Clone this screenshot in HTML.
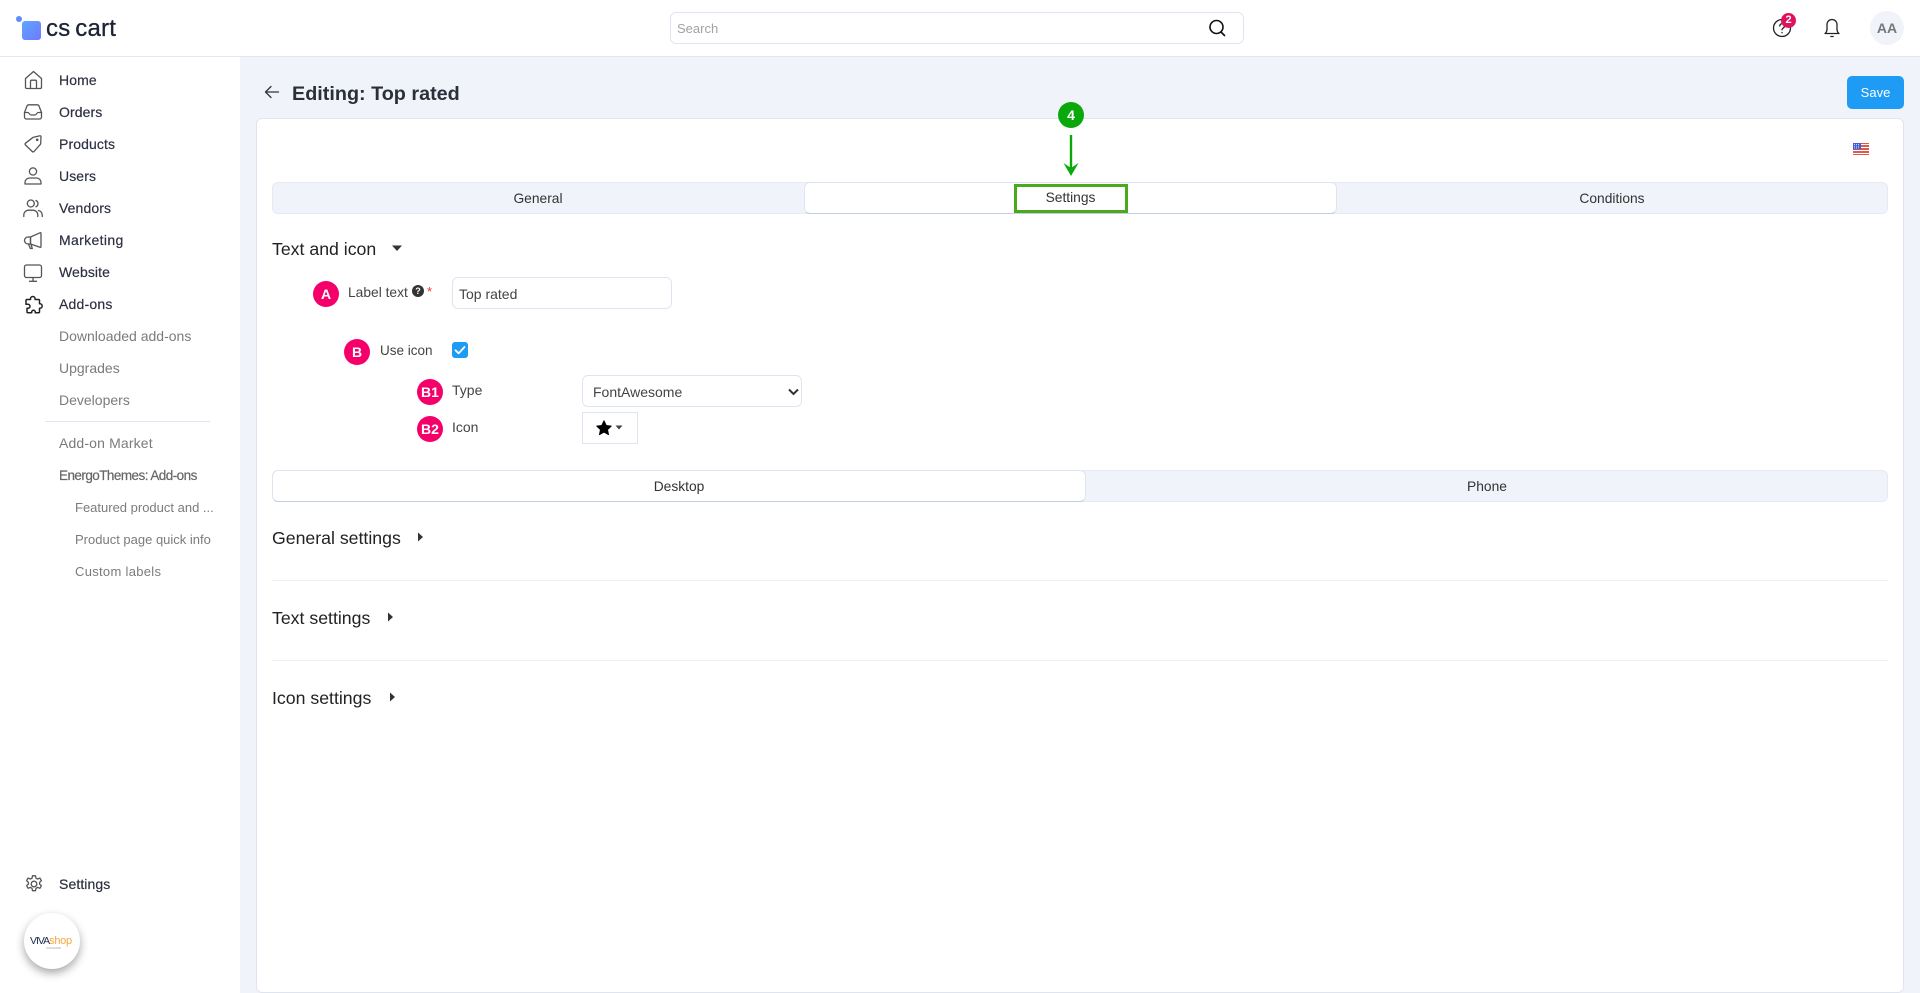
<!DOCTYPE html>
<html lang="en">
<head>
<meta charset="utf-8">
<title>Editing: Top rated</title>
<style>
html,body{margin:0;padding:0;width:1920px;height:993px;overflow:hidden;background:#f0f3f9;font-family:"Liberation Sans",sans-serif;color:#2b2f3a;font-size:14px}
.a{position:absolute;white-space:nowrap}
.t{position:absolute;white-space:nowrap;line-height:20px;height:20px}
.nav{left:59px;color:#2d3142;font-size:14px;-webkit-text-stroke:.2px #2d3142;letter-spacing:.1px}
.sub{left:59px;color:#7b7b7b;font-size:14px}
.ch{left:75px;color:#7b7b7b;font-size:13px}
.ic{position:absolute;left:23px;width:20px;height:20px;fill:none;stroke:#555;stroke-width:1.3;stroke-linejoin:round;stroke-linecap:round}
.tabbar{position:absolute;left:272px;width:1616px;height:32px;background:#f0f3f9;border-radius:6px;box-shadow:inset 0 0 0 1px #e6eaf3}
.tabon{position:absolute;background:#fff;border:1px solid #dfe5f0;border-bottom:1px solid #c2cde3;box-sizing:border-box;border-radius:6px}
.tabl{color:#333;text-align:center;font-size:13.8px}
.h{left:272px;font-size:17.7px;color:#222;line-height:24px;height:24px}
.bd{position:absolute;width:26px;height:26px;border-radius:50%;background:#f5006a;color:#fff;font-weight:bold;font-size:14px;line-height:26px;text-align:center}
.fld{position:absolute;background:#fff;border:1px solid #dfe5f0;box-sizing:border-box;border-radius:6px}
.hr{position:absolute;left:272px;width:1616px;height:1px;background:#eceef3}
</style>
</head>
<body>
<!-- top bar -->
<div class="a" style="left:0;top:0;width:1920px;height:56px;background:#fff;border-bottom:1px solid #e1e7f2;box-sizing:content-box"></div>
<div class="a" style="left:16px;top:16px;width:6px;height:6px;border-radius:50%;background:#5f8bff"></div>
<div class="a" style="left:22px;top:21px;width:19px;height:19px;border-radius:3px;background:linear-gradient(135deg,#5fa6ff,#6f78ff)"></div>
<div class="t" style="left:46px;top:17px;font-size:24px;line-height:24px;height:24px;color:#1c2333;-webkit-text-stroke:.3px #1c2333;letter-spacing:.2px;word-spacing:-2px">cs cart</div>

<div class="fld" style="left:670px;top:12px;width:574px;height:32px"></div>
<div class="t" style="left:677px;top:19px;color:#a2a2a2;font-size:13px">Search</div>
<svg class="a" style="left:1207px;top:18px" width="20" height="20" viewBox="0 0 20 20" fill="none" stroke="#111" stroke-width="1.6" stroke-linecap="round"><circle cx="9.5" cy="9" r="6.5"/><path d="M14 14l3.500 3.500"/></svg>

<svg class="a" style="left:1771px;top:17px" width="22" height="22" viewBox="0 0 22 22" fill="none" stroke="#222" stroke-width="1.3" stroke-linecap="round"><circle cx="11" cy="11" r="8.500"/><path d="M8.800 9a2.300 2.300 0 1 1 3.400 2c-.8.500-1.200 1-1.200 1.800"/><path d="M11 15.500v.3"/></svg>
<div class="a" style="left:1781px;top:13px;width:15px;height:15px;border-radius:50%;background:#e0115f;color:#fff;font-weight:bold;font-size:11px;line-height:15px;text-align:center">2</div>
<svg class="a" style="left:1821px;top:17px" width="22" height="22" viewBox="0 0 22 22" fill="none" stroke="#222" stroke-width="1.3" stroke-linecap="round" stroke-linejoin="round"><path d="M4 16.500c1.300-1 2-2.500 2-4.500V7.500a5 5 0 0 1 10 0V12c0 2 .7 3.500 2 4.500z"/><path d="M9.800 19.500h2.400"/></svg>
<div class="a" style="left:1870px;top:11px;width:34px;height:34px;border-radius:50%;background:#f0f3f9;color:#777;font-weight:bold;font-size:14px;line-height:34px;text-align:center">AA</div>

<!-- sidebar -->
<div class="a" style="left:0;top:57px;width:240px;height:936px;background:#fff"></div>
<svg class="ic" style="top:70px" viewBox="0 0 20 20"><path d="M2.500 8.500L10.500 1.500l8 7v8.800a1.200 1.200 0 0 1-1.200 1.200H3.700a1.200 1.200 0 0 1-1.200-1.200z"/><path d="M7.500 18.500v-7a1.300 1.300 0 0 1 1.300-1.300h3.400a1.300 1.300 0 0 1 1.300 1.300v7"/></svg>
<div class="t nav" style="top:70px">Home</div>
<svg class="ic" style="top:102px" viewBox="0 0 20 20"><path d="M1.500 10.500L4 4a2 2 0 0 1 1.800-1.200h8.400A2 2 0 0 1 16 4l2.500 6.500v4.500a2 2 0 0 1-2 2h-13a2 2 0 0 1-2-2z"/><path d="M1.500 10.500h3.500c1 0 1.500 2.500 3 2.500h4c1.500 0 2-2.500 3-2.500h3.500"/></svg>
<div class="t nav" style="top:102px">Orders</div>
<svg class="ic" style="top:134px" viewBox="0 0 20 20"><path d="M10.500 3.300L17 1.800a.8.8 0 0 1 1 .8l-.3 7a1.500 1.500 0 0 1-.5 1L11 17.500a1.300 1.300 0 0 1-1.800 0L2.500 11a1.300 1.300 0 0 1 0-1.800L9.500 3.800a2 2 0 0 1 1-.5z"/><circle cx="14.200" cy="5.800" r=".7"/></svg>
<div class="t nav" style="top:134px">Products</div>
<svg class="ic" style="top:166px" viewBox="0 0 20 20"><circle cx="10" cy="5.500" r="3.600"/><path d="M2 18v-1.500c0-2.500 2-4.500 4.500-4.500h7c2.500 0 4.500 2 4.500 4.500V18z"/></svg>
<div class="t nav" style="top:166px">Users</div>
<svg class="ic" style="top:198px" viewBox="0 0 20 20"><circle cx="7.800" cy="5.500" r="3.500"/><path d="M.8 18.500v-1.500c0-2.800 2.200-4.800 5-4.800h4c2.800 0 5 2 5 4.800v1.500"/><path d="M13 2.500a3.500 3.500 0 0 1 0 6.300"/><path d="M15.500 12.500c2.300.6 3.700 2.300 3.700 4.500v1.500"/></svg>
<div class="t nav" style="top:198px">Vendors</div>
<svg class="ic" style="top:231px" viewBox="0 0 20 20"><path d="M7.500 6L17 1.800a.6.6 0 0 1 1 .5v13.400a.6.6 0 0 1-1 .5L7.500 13z"/><path d="M7.500 6H5a3.500 3.500 0 0 0 0 7h2.500z"/><path d="M5.500 13l1.800 4.500h2L8 13.500"/></svg>
<div class="t nav" style="top:230px;letter-spacing:.35px">Marketing</div>
<svg class="ic" style="top:263px" viewBox="0 0 20 20"><rect x="1.500" y="2" width="17" height="12.500" rx="2"/><path d="M6.500 18.300h7M10 14.500v3.800"/></svg>
<div class="t nav" style="top:262px">Website</div>
<svg class="ic" style="top:295px;stroke:#222;stroke-width:1.500" viewBox="0 0 20 20"><path d="M7.500 4.500V3.800a2.300 2.300 0 0 1 4.600 0v.7h3.400a1 1 0 0 1 1 1v3.300h.5a2.200 2.200 0 0 1 0 4.400h-.5v3.600a1 1 0 0 1-1 1h-3.200v-.8a1.800 1.800 0 0 0-3.600 0v.8H5a1 1 0 0 1-1-1v-3.500h1a2 2 0 0 0 0-4H3V5.500a1 1 0 0 1 1-1z"/></svg>
<div class="t nav" style="top:294px;letter-spacing:.2px">Add-ons</div>

<div class="t sub" style="top:326px">Downloaded add-ons</div>
<div class="t sub" style="top:358px">Upgrades</div>
<div class="t sub" style="top:390px">Developers</div>
<div class="a" style="left:45px;top:421px;width:165px;height:1px;background:#dfe5f0"></div>
<div class="t sub" style="top:433px;letter-spacing:.15px">Add-on Market</div>
<div class="t sub" style="top:466px;color:#666;-webkit-text-stroke:.2px #666;font-size:13.500px;letter-spacing:-.55px">EnergoThemes: Add-ons</div>
<div class="t ch" style="top:498px">Featured product and ...</div>
<div class="t ch" style="top:530px">Product page quick info</div>
<div class="t ch" style="top:562px;letter-spacing:.3px">Custom labels</div>

<svg class="ic" style="top:874px;left:24px" viewBox="0 0 20 20"><circle cx="10" cy="10" r="2.800"/><path d="M8.500 1.800h3l.5 2.400 1.600.8 2.300-.9 1.500 2.600-1.800 1.600v1.800l1.800 1.600-1.500 2.600-2.300-.9-1.600.9-.5 2.400h-3l-.5-2.400-1.600-.9-2.300.9-1.500-2.600 1.800-1.600V8.300L2.600 6.700l1.500-2.600 2.300.9L8 4.200z"/></svg>
<div class="t nav" style="top:874px">Settings</div>

<div class="a" style="left:24px;top:913px;width:56px;height:56px;border-radius:50%;background:#fff;box-shadow:0 4px 9px rgba(0,0,0,.35)"></div>
<div class="a" style="left:30px;top:935px;font-size:10.500px;line-height:12px;color:#1d2b4f;letter-spacing:-1px">VIVA<span style="color:#f4a742;letter-spacing:-.3px;font-size:11px">shop</span></div>
<div class="a" style="left:46px;top:946px;font-size:3px;line-height:4px;color:#999">VIVASHOP</div>

<!-- page head -->
<svg class="a" style="left:263px;top:83px" width="18" height="18" viewBox="0 0 18 18" fill="none" stroke="#333" stroke-width="1.300" stroke-linecap="round" stroke-linejoin="round"><path d="M15.500 9H3M8 3.500L2.500 9 8 14.500"/></svg>
<div class="t" style="left:292px;top:82px;font-size:19.800px;line-height:24px;height:24px;font-weight:bold;color:#2b2f3a">Editing: Top rated</div>
<div class="a" style="left:1847px;top:76px;width:57px;height:33px;background:#1e9bf5;border-radius:5px;color:#fff;font-size:13px;line-height:33px;text-align:center">Save</div>

<!-- panel -->
<div class="a" style="left:256px;top:118px;width:1648px;height:875px;background:#fff;border:1px solid #dfe5f0;border-radius:6px;box-sizing:border-box"></div>

<svg class="a" style="left:1853px;top:143px" width="16" height="12" viewBox="0 0 16 12"><rect width="16" height="12" fill="#e2574c"/><path d="M0 1.500h16M0 4.500h16M0 7.500h16M0 10.500h16" stroke="#fff" stroke-width="1"/><rect width="8" height="6.500" fill="#3f5fcf"/><path d="M1 1.500h6M1 3.200h6M1 5h6" stroke="#fff" stroke-width=".7" stroke-dasharray="1 1"/></svg>

<div class="tabbar" style="top:182px"></div>
<div class="tabon" style="left:804px;top:182px;width:533px;height:32px"></div>
<div class="t tabl" style="left:272px;top:189px;width:532px">General</div>
<div class="t tabl" style="left:805px;top:188px;width:531px">Settings</div>
<div class="t tabl" style="left:1336px;top:189px;width:552px">Conditions</div>
<div class="a" style="left:1014px;top:184px;width:114px;height:29px;border:3px solid #4aa91c;box-sizing:border-box"></div>
<div class="a" style="left:1058px;top:102px;width:26px;height:26px;border-radius:50%;background:#0aa80a;color:#fff;font-weight:bold;font-size:14px;line-height:26px;text-align:center">4</div>
<svg class="a" style="left:1061px;top:134px" width="20" height="44" viewBox="0 0 20 44"><path d="M10 1v34" stroke="#0aa80a" stroke-width="2.400"/><path d="M2.500 29L10 42l7.500-13-7.500 5z" fill="#0aa80a"/></svg>

<div class="t h" style="top:237px">Text and icon</div>
<svg class="a" style="left:391px;top:245px" width="12" height="7" viewBox="0 0 12 7"><path d="M1 .5h10L6 6z" fill="#333"/></svg>

<div class="bd" style="left:313px;top:281px">A</div>
<div class="t" style="left:348px;top:283px;color:#444;font-size:13.800px">Label text</div>
<div class="a" style="left:412px;top:285px;width:12px;height:12px;border-radius:50%;background:#333;color:#fff;font-size:9px;font-weight:bold;line-height:12px;text-align:center">?</div>
<div class="a" style="left:427px;top:285px;color:#e33;font-size:13px;line-height:14px">*</div>
<div class="fld" style="left:452px;top:277px;width:220px;height:32px"></div>
<div class="t" style="left:459px;top:284px;color:#444">Top rated</div>

<div class="bd" style="left:344px;top:339px">B</div>
<div class="t" style="left:380px;top:341px;color:#444;font-size:13.500px">Use icon</div>
<div class="a" style="left:452px;top:342px;width:16px;height:16px;border-radius:3px;background:#1e9bf5"></div>
<svg class="a" style="left:452px;top:342px" width="16" height="16" viewBox="0 0 16 16" fill="none" stroke="#fff" stroke-width="1.800" stroke-linecap="round" stroke-linejoin="round"><path d="M3.500 8.300L6.700 11.300 12.500 5"/></svg>

<div class="bd" style="left:417px;top:379px">B1</div>
<div class="t" style="left:452px;top:380px;color:#444">Type</div>
<div class="fld" style="left:582px;top:375px;width:220px;height:32px"></div>
<div class="t" style="left:593px;top:382px;color:#444">FontAwesome</div>
<svg class="a" style="left:788px;top:388px" width="11" height="8" viewBox="0 0 11 8" fill="none" stroke="#333" stroke-width="2"><path d="M1 1.500l4.500 4.500L10 1.500"/></svg>

<div class="bd" style="left:417px;top:416px">B2</div>
<div class="t" style="left:452px;top:417px;color:#444">Icon</div>
<div class="a" style="left:582px;top:412px;width:56px;height:32px;background:#fff;border:1px solid #dfe5f0;box-sizing:border-box"></div>
<svg class="a" style="left:596px;top:420px" width="16" height="16" viewBox="0 0 16 16"><path d="M8 .8l2.200 4.700 5 .6-3.700 3.500 1 5-4.500-2.500-4.500 2.500 1-5L.8 6.100l5-.6z" fill="#000" stroke="#000" stroke-linejoin="round"/></svg>
<svg class="a" style="left:615px;top:425px" width="8" height="5" viewBox="0 0 8 5"><path d="M.5.500h7L4 4.500z" fill="#444"/></svg>

<div class="tabbar" style="top:470px"></div>
<div class="tabon" style="left:272px;top:470px;width:814px;height:32px"></div>
<div class="t tabl" style="left:272px;top:477px;width:814px">Desktop</div>
<div class="t tabl" style="left:1086px;top:477px;width:802px">Phone</div>

<div class="t h" style="top:526px">General settings</div>
<svg class="a" style="left:417px;top:531px" width="7" height="12" viewBox="0 0 7 12"><path d="M1 1.500v9L6 6z" fill="#333"/></svg>
<div class="hr" style="top:580px"></div>
<div class="t h" style="top:606px">Text settings</div>
<svg class="a" style="left:387px;top:611px" width="7" height="12" viewBox="0 0 7 12"><path d="M1 1.500v9L6 6z" fill="#333"/></svg>
<div class="hr" style="top:660px"></div>
<div class="t h" style="top:686px">Icon settings</div>
<svg class="a" style="left:389px;top:691px" width="7" height="12" viewBox="0 0 7 12"><path d="M1 1.500v9L6 6z" fill="#333"/></svg>
</body>
</html>
